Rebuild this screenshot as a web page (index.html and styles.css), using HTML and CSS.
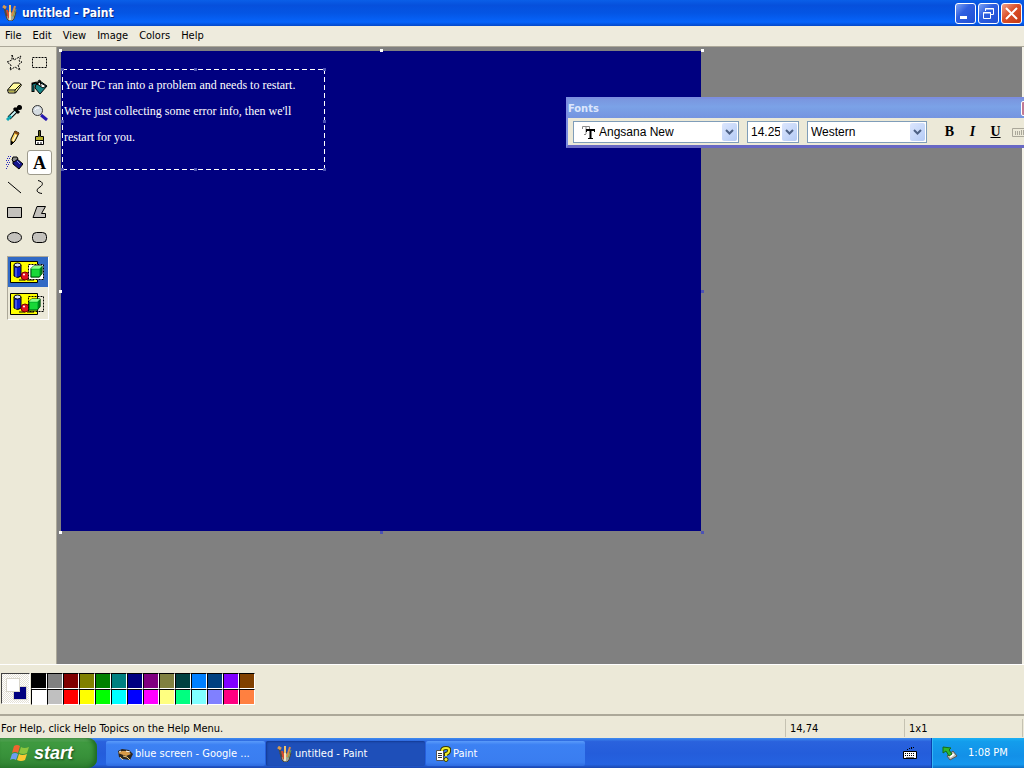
FILE: index.html
```
<!DOCTYPE html>
<html lang="en">
<head>
    <meta charset="UTF-8">
    <meta name="viewport" content="width=device-width, initial-scale=1.0">
    <title>untitled - Paint</title>
    <link rel="stylesheet" href="styles.css">
</head>
<body>

<svg class="defs" aria-hidden="true">
    <symbol id="paint" viewBox="0 0 16 16">
        <path d="M3 7l2 7 2 2h3l2-2 2-7z" fill="#9fa59a" stroke="#4b4438"/>
        <path d="M2 2l3 9" stroke="#4a4a44" stroke-width="2"/>
        <path d="M1 1l3 2" stroke="#d99a4e" stroke-width="3"/>
        <path d="M8 0v10" stroke="#f0c36a" stroke-width="2"/>
        <path d="M13 1l-3 10" stroke="#d88b48" stroke-width="2"/>
        <path d="M5 5l2 8" stroke="#d8492b" stroke-width="2"/>
        <path d="M8 7v8" stroke="#f3e6b8" stroke-width="2"/>
        <path d="M14 4l-3 8" stroke="#7aa54b"/>
    </symbol>
    <symbol id="shapes" viewBox="0 0 36 26">
        <path d="M1.500 2.500h27v21h-27z" fill="#ff0" stroke="#000"/>
        <path d="M5 6v11q4 3 7 0V6z" fill="#0b1ccb" stroke="#000"/>
        <path d="M7 9v9" stroke="#7d90ff"/>
        <ellipse cx="8.500" cy="6" rx="3.500" ry="2" fill="#d5deff" stroke="#000"/>
        <path d="M10 21h6M18 21h7" stroke="#808000" stroke-width="2"/>
        <circle cx="16" cy="17" r="4" fill="#e01020" stroke="#700"/>
        <circle cx="15" cy="15.500" r="1" fill="#fff"/>
    </symbol>
    <symbol id="cube" viewBox="0 0 16 16">
        <path d="M2 5l3-3h9v8l-3 4H2z" fill="#00b028" stroke="#003c08"/>
        <path d="M2 5l3-3h9l-3 3z" fill="#8cff8c"/>
        <path d="M3 6h8v7H3z" fill="#18d838"/>
        <path d="M12 5l2-2v7l-2 3z" fill="#007818"/>
    </symbol>
</svg>

<div class="window">
    <header class="titlebar">
        <svg class="icon"><use href="#paint"/></svg>
        <h1>untitled - Paint</h1>
        <button class="win-btn" aria-label="Minimize"><svg viewBox="0 0 19 19"><path d="M4 12h7v3H4z" fill="#fff"/></svg></button>
        <button class="win-btn" aria-label="Restore"><svg viewBox="0 0 19 19"><path d="M6.500 7V4.500h8v6H12M6 5h9M4.500 8.500h7v6h-7zM4 9h8" fill="none" stroke="#fff"/></svg></button>
        <button class="win-btn close" aria-label="Close"><svg viewBox="0 0 19 19"><path d="M4 4l11 11M15 4L4 15" stroke="#fff" stroke-width="2"/></svg></button>
    </header>

    <nav class="menubar">
        <button>File</button>
        <button>Edit</button>
        <button>View</button>
        <button>Image</button>
        <button>Colors</button>
        <button>Help</button>
    </nav>

    <main class="workspace">
        <aside class="toolbox">
            <div class="tools">
                <button aria-label="Free-Form Select"><svg viewBox="0 0 17 17"><path d="M6 1l2 5 7-4-2 5 3 1-4 3 2 5-5-3-5 3 1-5-4-3 5-2z" fill="none" stroke="#000" stroke-dasharray="2 1"/></svg></button>
                <button aria-label="Select"><svg viewBox="0 0 17 17"><path d="M1.500 3.500h14v10h-14z" fill="none" stroke="#000" stroke-dasharray="2 1"/></svg></button>
                <button aria-label="Eraser"><svg viewBox="0 0 17 17"><path d="M1.500 11l6-7h6l2 2-6 8h-7z" fill="#fffb9c" stroke="#000"/><path d="M2 11h7l6-6M9 11v3" fill="none" stroke="#000"/><path d="M3 12h5v1H3z" fill="#b3ae48"/></svg></button>
                <button aria-label="Fill With Color"><svg viewBox="0 0 17 17"><path d="M5 5l4-3 7 5-7 8-5-6z" fill="#16868a" stroke="#000"/><path d="M8 3l7 4-3 2-6-4z" fill="#fff" stroke="#000"/><path d="M7 6V2l2-1 1 6" fill="none" stroke="#000"/><path d="M6 4L2 5v8" fill="none" stroke="#000" stroke-width="3"/><path d="M5 5L2 6v6" fill="none" stroke="#087a80"/></svg></button>
                <button aria-label="Pick Color"><svg viewBox="0 0 17 17"><path d="M10 7l-7 7" stroke="#000" stroke-width="4"/><path d="M10 7l-6 6" stroke="#c9f6f8" stroke-width="2"/><path d="M5 12l-4 4" stroke="#12a7b5" stroke-width="3"/><path d="M8 4l5 5M10 6l4-4" stroke="#000" stroke-width="3"/><circle cx="13.500" cy="3.500" r="2.500" fill="#000"/></svg></button>
                <button aria-label="Magnifier"><svg viewBox="0 0 17 17"><circle cx="6.500" cy="6.500" r="5" fill="#d4dbe0" stroke="#333"/><path d="M4 6q1-3 4-2" fill="none" stroke="#fff"/><path d="M10 11l6 5" stroke="#2618b0" stroke-width="3"/></svg></button>
                <button aria-label="Pencil"><svg viewBox="0 0 17 17"><path d="M5 10l4-8 4 2-4 8-4 4z" fill="#ffd95e" stroke="#000"/><path d="M9 2l4 2-1 2-4-2z" fill="#8a4a10"/><path d="M10 6l-3 6" stroke="#fff"/><path d="M5 12l3 1-3 3z" fill="#000"/></svg></button>
                <button aria-label="Brush"><svg viewBox="0 0 17 17"><path d="M7.500 1.500h2v6h3v8h-8v-8h3z" fill="#fff" stroke="#000"/><path d="M8 2h1v6H8z" fill="#5a5a10"/><path d="M5 8h7v3H5z" fill="#b6b028"/><path d="M4 11.500h9M7 13v3M10 13v3" stroke="#000"/></svg></button>
                <button aria-label="Airbrush"><svg viewBox="0 0 17 17"><path d="M7 7l3-3 7 6-4 5-6-5z" fill="#15158d" stroke="#000"/><path d="M6 6l1-3h4l1 2-4 3z" fill="#8a8a8a" stroke="#000"/><path d="M11 7l3 3" stroke="#8e9be8"/><path d="M2 2.500h4M1 4.500h4M0 6.500h4M1 8.500h3M0 10.500h3M1 12.500h2M0 14.500h1" stroke="#2929bd" stroke-dasharray="1 1"/></svg></button>
                <button class="active" aria-label="Text" aria-pressed="true"><b>A</b></button>
                <button aria-label="Line"><svg viewBox="0 0 17 17"><path d="M2 3l13 11" stroke="#000"/></svg></button>
                <button aria-label="Curve"><svg viewBox="0 0 17 17"><path d="M7 1.500C13 3 12 6 9 8C4 11 6 14 11 14.500" fill="none" stroke="#000"/></svg></button>
                <button aria-label="Rectangle"><svg viewBox="0 0 17 17"><path d="M1.500 3.500h14v10h-14z" fill="#c3c1bc" stroke="#000"/></svg></button>
                <button aria-label="Polygon"><svg viewBox="0 0 17 17"><path d="M6 2.500h8.500L10.500 9.500h4v4H2z" fill="#c3c1bc" stroke="#000"/></svg></button>
                <button aria-label="Ellipse"><svg viewBox="0 0 17 17"><ellipse cx="8.500" cy="8.500" rx="7" ry="5" fill="#c3c1bc" stroke="#000"/></svg></button>
                <button aria-label="Rounded Rectangle"><svg viewBox="0 0 17 17"><rect x="1.500" y="3.500" width="14" height="10" rx="4" fill="#c3c1bc" stroke="#000"/></svg></button>
            </div>
            <div class="options">
                <button class="selected" aria-label="Opaque background"><svg viewBox="0 0 36 26"><use href="#shapes" width="36" height="26"/><path d="M19.500 5.500h15v15h-15z" fill="#fff" stroke="#000" stroke-dasharray="2 1"/><use href="#cube" x="20" y="5" width="15" height="15"/></svg></button>
                <button aria-label="Transparent background"><svg viewBox="0 0 36 26"><use href="#shapes" width="36" height="26"/><use href="#cube" x="18" y="6" width="15" height="15"/><path d="M19.500 5.500h15v15h-15z" fill="none" stroke="#000" stroke-dasharray="2 1"/></svg></button>
            </div>
        </aside>

        <section class="well">
            <div class="canvas">
                <i class="grip tl"></i><i class="grip tc"></i><i class="grip tr"></i>
                <i class="grip ml"></i><i class="grip mr blue"></i>
                <i class="grip bl"></i><i class="grip bc blue"></i><i class="grip br blue"></i>
                <div class="textbox">
                    <textarea aria-label="Text" spellcheck="false">Your PC ran into a problem and needs to restart.
We're just collecting some error info, then we'll
restart for you.</textarea>
                    <i class="grip tl blue"></i><i class="grip tc blue"></i><i class="grip tr blue"></i>
                    <i class="grip ml blue"></i><i class="grip mr blue"></i>
                    <i class="grip bl blue"></i><i class="grip bc blue"></i><i class="grip br blue"></i>
                </div>
            </div>
        </section>
    </main>

    <section class="palette">
        <div class="current"><span class="back"></span><span class="fore"></span></div>
        <div class="colors">
            <button class="c1" aria-label="Black"></button>
            <button class="c2" aria-label="Gray"></button>
            <button class="c3" aria-label="Maroon"></button>
            <button class="c4" aria-label="Olive"></button>
            <button class="c5" aria-label="Green"></button>
            <button class="c6" aria-label="Teal"></button>
            <button class="c7" aria-label="Navy"></button>
            <button class="c8" aria-label="Purple"></button>
            <button class="c9" aria-label="Moss"></button>
            <button class="c10" aria-label="Dark teal"></button>
            <button class="c11" aria-label="Azure"></button>
            <button class="c12" aria-label="Steel blue"></button>
            <button class="c13" aria-label="Violet"></button>
            <button class="c14" aria-label="Brown"></button>
            <button class="c15" aria-label="White"></button>
            <button class="c16" aria-label="Silver"></button>
            <button class="c17" aria-label="Red"></button>
            <button class="c18" aria-label="Yellow"></button>
            <button class="c19" aria-label="Lime"></button>
            <button class="c20" aria-label="Cyan"></button>
            <button class="c21" aria-label="Blue"></button>
            <button class="c22" aria-label="Magenta"></button>
            <button class="c23" aria-label="Light yellow"></button>
            <button class="c24" aria-label="Spring green"></button>
            <button class="c25" aria-label="Light cyan"></button>
            <button class="c26" aria-label="Periwinkle"></button>
            <button class="c27" aria-label="Rose"></button>
            <button class="c28" aria-label="Orange"></button>
        </div>
    </section>

    <footer class="statusbar">
        <span class="help">For Help, click Help Topics on the Help Menu.</span>
        <span class="pos">14,74</span>
        <span class="size">1x1</span>
    </footer>
</div>

<section class="fonts">
    <div class="fonts-title"><h2>Fonts</h2><button aria-label="Close fonts"></button></div>
    <div class="fonts-body">
        <div class="combo face">
            <svg viewBox="0 0 14 14"><path d="M1.500 4V1.500h7V4M5 2v7M3 9.500h2" fill="none" stroke="#888"/><path d="M5.500 7V4.500h8V7M7 13.500h5" fill="none" stroke="#000"/><path d="M5 5h9M9.500 4v9" stroke="#000" stroke-width="2"/></svg>
            <select aria-label="Font"><option>Angsana New</option></select>
            <span class="arrow"><svg viewBox="0 0 9 7"><path d="M1 1l3.500 3.500L8 1" fill="none" stroke="#4d6185" stroke-width="2"/></svg></span>
        </div>
        <div class="combo points">
            <select aria-label="Font size"><option>14.25</option></select>
            <span class="arrow"><svg viewBox="0 0 9 7"><path d="M1 1l3.500 3.500L8 1" fill="none" stroke="#4d6185" stroke-width="2"/></svg></span>
        </div>
        <div class="combo script">
            <select aria-label="Script"><option>Western</option></select>
            <span class="arrow"><svg viewBox="0 0 9 7"><path d="M1 1l3.500 3.500L8 1" fill="none" stroke="#4d6185" stroke-width="2"/></svg></span>
        </div>
        <div class="format">
            <button aria-label="Bold"><b>B</b></button>
            <button aria-label="Italic"><i>I</i></button>
            <button aria-label="Underline"><u>U</u></button>
            <button aria-label="Vertical writing"><svg viewBox="0 0 14 9"><path d="M.5.500h13v8H.5zM3.500 3v4M5.500 3v4M7.500 3v4M9.500 2v5M11.500 2v5" fill="none" stroke="#aaa79a"/></svg></button>
        </div>
    </div>
</section>

<div class="taskbar">
    <button class="start">
        <svg viewBox="0 0 20 18"><path d="M4 2q3-2 6 0L8 9Q5 7 2 9z" fill="#f0652f"/><path d="M11 3q3 2 8 0l-2 6q-4 2-8 0z" fill="#8cc63e"/><path d="M2 10q3-2 6 0l-2 6q-3-2-6 0z" fill="#6c9df0"/><path d="M9 10q3 2 8 0l-2 6q-4 2-8 0z" fill="#fbc832"/></svg>
        <span>start</span>
    </button>
    <div class="tasks">
        <button><svg viewBox="0 0 16 16"><path d="M1 5l4-2 7 1 4 4-3 6-7-1-4-2z" fill="#2d241b"/><path d="M1 7l4-2h5l4 3-5 2z" fill="#d89a48"/><path d="M3 11l3 3M10 11l3 3M6 10l4 1" stroke="#e8c77c"/><path d="M9 5l4 1M2 6l2-1" stroke="#fff"/></svg>blue screen - Google ...</button>
        <button class="current-task"><svg><use href="#paint"/></svg>untitled - Paint</button>
        <button><svg viewBox="0 0 16 16"><path d="M1.500 4.500h7v10h-7z" fill="#fff" stroke="#555"/><path d="M3 7.500h4M3 9.500h4M3 11.500h4" stroke="#333"/><path d="M7 5q0-3 4-3t3 3q0 2-3 3v2" fill="none" stroke="#3c3c00" stroke-width="4"/><path d="M7 5q0-3 4-3t3 3q0 2-3 3v2" fill="none" stroke="#f2f02a" stroke-width="2"/><circle cx="11" cy="13.500" r="2" fill="#f2f02a" stroke="#3c3c00"/></svg>Paint</button>
    </div>
    <button class="keyboard" aria-label="Keyboard"><svg viewBox="0 0 14 12"><path d="M4 2.500h2M8 .5h3M6 1.500h3" stroke="#000" stroke-dasharray="1 1"/><path d="M.5 4.500h13v7H.5z" fill="#fff" stroke="#000"/><path d="M2 6.500h10M2 8.500h10" stroke="#000" stroke-dasharray="1 1"/><path d="M3 10.500h8" stroke="#777"/></svg></button>
    <div class="tray">
        <svg viewBox="0 0 16 16"><path d="M5 11l6-5 4 5-7 4z" fill="#bcbcb4" stroke="#555"/><path d="M8 12l4-3" stroke="#fff" stroke-width="2"/><path d="M1 2l8 1-2 2 3 4-3 2-3-5-3 2z" fill="#2eb82e" stroke="#176b17"/></svg>
        <time>1:08 PM</time>
    </div>
</div>

</body>
</html>
```
FILE: styles.css
```
* {
    box-sizing: border-box;
}

body {
    margin: 0;
    height: 100vh;
    display: flex;
    flex-direction: column;
    overflow: hidden;
    position: relative;
    background: #ece9d8;
    font: 11px/14px Tahoma, "DejaVu Sans Condensed", sans-serif;
    color: #000;
}

button {
    font: inherit;
    color: inherit;
    margin: 0;
    padding: 0;
    border: 0;
    background: none;
}

svg {
    display: block;
    fill: none;
}

.defs {
    position: absolute;
    width: 0;
    height: 0;
}

.window {
    flex: 1;
    min-height: 0;
    display: flex;
    flex-direction: column;
}

/* title bar */
.titlebar {
    display: flex;
    align-items: center;
    gap: 2px;
    height: 26px;
    padding: 0 2px;
    background: linear-gradient(#0a5fe8 0, #0650dc 20%, #0455e4 50%, #0664fb 85%, #0448c8 100%);
}

.titlebar .icon {
    width: 16px;
    height: 16px;
}

.titlebar h1 {
    flex: 1;
    margin: 0 2px;
    font: bold 12px/16px "Trebuchet MS", "DejaVu Sans Condensed", sans-serif;
    color: #fff;
    text-shadow: 1px 1px #0a2a86;
}

.win-btn {
    width: 21px;
    height: 21px;
    border: 1px solid #fff;
    border-radius: 3px;
    background: linear-gradient(135deg, #7da2f4, #2f5fe0 40%, #1f4fd4);
}

.win-btn.close {
    background: linear-gradient(135deg, #f0a28a, #dc4f28 45%, #c23a14);
}

/* menu */
.menubar {
    display: flex;
    gap: 11px;
    height: 20px;
    padding: 0 5px;
    background: #eeebdd;
}

/* work area */
.workspace {
    flex: 1;
    min-height: 0;
    display: flex;
    border-top: 1px solid #aca899;
    border-bottom: 1px solid #fff;
}

.toolbox {
    width: 57px;
    padding: 3px 0 0 2px;
    background: #ece9d8;
    border-right: 1px solid #aca899;
}

.tools {
    display: grid;
    grid-template-columns: 25px 25px;
    grid-auto-rows: 25px;
}

.tools button {
    display: flex;
    align-items: center;
    justify-content: center;
}

.tools svg {
    width: 17px;
    height: 17px;
}

.tools .active {
    border: 1px solid #9d9a8c;
    border-radius: 3px;
    background: #fff;
    font: 18px/20px "Liberation Serif", serif;
}

.options {
    width: 42px;
    margin: 6px 0 0 5px;
    display: grid;
    gap: 2px;
    border: 1px solid;
    border-color: #aca899 #fff #fff #aca899;
}

.options button {
    display: flex;
    align-items: center;
    padding-left: 1px;
    height: 30px;
}

.options .selected {
    background: #316ac5;
}

.options svg {
    width: 36px;
    height: 26px;
}

.well {
    flex: 1;
    padding: 4px;
    background: #808080;
    border-right: 2px solid #f4f2e8;
    overflow: hidden;
}

.canvas {
    position: relative;
    width: 640px;
    height: 480px;
    background: #000080;
}

.grip {
    position: absolute;
    width: 3px;
    height: 3px;
    background: #fff;
}

.grip.blue {
    background: #4c52b4;
}

.tl, .tc, .tr { top: -2px; }
.ml, .mr { top: calc(50% - 1px); }
.bl, .bc, .br { bottom: -3px; }
.tl, .ml, .bl { left: -2px; }
.tc, .bc { left: calc(50% - 1px); }
.tr, .mr, .br { right: -3px; }

.textbox {
    position: absolute;
    left: 1px;
    top: 18px;
    width: 263px;
    height: 101px;
    background:
        repeating-linear-gradient(90deg, #fff 0 5px, transparent 5px 8px) top / 100% 1px no-repeat,
        repeating-linear-gradient(90deg, #fff 0 5px, transparent 5px 8px) bottom / 100% 1px no-repeat,
        repeating-linear-gradient(#fff 0 5px, transparent 5px 8px) left / 1px 100% no-repeat,
        repeating-linear-gradient(#fff 0 5px, transparent 5px 8px) right / 1px 100% no-repeat;
}

.textbox .grip {
    margin: 1px 2px 2px 1px;
}

.textbox textarea {
    display: block;
    width: 100%;
    height: 100%;
    padding: 3px 2px;
    border: 0;
    outline: 0;
    resize: none;
    overflow: hidden;
    background: none;
    color: #fff;
    font: 12px/26px "Liberation Serif", serif;
}

/* color box */
.palette {
    display: flex;
    gap: 1px;
    height: 50px;
    padding: 8px 1px;
    border-bottom: 1px solid #aca899;
}

.current {
    display: grid;
    width: 29px;
    height: 31px;
    border: 1px solid;
    border-color: #404040 #fff #fff #404040;
    background: repeating-conic-gradient(#fff 0 25%, #e4e1d6 0 50%) 0 0 / 2px 2px;
}

.current span {
    grid-area: 1 / 1;
    width: 14px;
    height: 14px;
    border: 1px solid #d8d5ca;
}

.current .back {
    margin: 12px 0 0 11px;
    background: #000080;
}

.current .fore {
    margin: 4px 0 0 4px;
    background: #fff;
}

.colors {
    display: grid;
    grid-template-columns: repeat(14, 16px);
    grid-auto-rows: 16px;
}

.colors button {
    border: 1px solid;
    border-color: #000 #fff #fff #000;
}

.c1 { background: #000; }
.c2 { background: #808080; }
.c3 { background: #800000; }
.c4 { background: #808000; }
.c5 { background: #008000; }
.c6 { background: #008080; }
.c7 { background: #000080; }
.c8 { background: #800080; }
.c9 { background: #808040; }
.c10 { background: #004040; }
.c11 { background: #0080ff; }
.c12 { background: #004080; }
.c13 { background: #8000ff; }
.c14 { background: #804000; }
.c15 { background: #fff; }
.c16 { background: #c0c0c0; }
.c17 { background: #f00; }
.c18 { background: #ff0; }
.c19 { background: #0f0; }
.c20 { background: #0ff; }
.c21 { background: #00f; }
.c22 { background: #f0f; }
.c23 { background: #ffff80; }
.c24 { background: #00ff80; }
.c25 { background: #80ffff; }
.c26 { background: #8080ff; }
.c27 { background: #ff0080; }
.c28 { background: #ff8040; }

/* status bar */
.statusbar {
    display: flex;
    height: 23px;
    padding: 3px 1px 1px;
    border-top: 1px solid #aca899;
    line-height: 20px;
}

.help {
    flex: 1;
}

.pos, .size {
    width: 119px;
    padding-left: 4px;
    border-left: 1px solid #c5c2b2;
}

.size {
    border-right: 1px solid #c5c2b2;
}

/* fonts toolbar */
.fonts {
    position: absolute;
    left: 566px;
    top: 97px;
    width: 476px;
    border: 2px solid #7c8ee0;
    border-bottom: 3px solid #6868c4;
    background: #ece9d8;
}

.fonts-title {
    display: flex;
    align-items: center;
    height: 19px;
    background: linear-gradient(#7a96df, #7ba2e7 40%, #7494e0);
}

.fonts-title h2 {
    flex: 1;
    margin: 0;
    font-size: 11px;
    color: #dce6fc;
}

.fonts-title button {
    width: 19px;
    height: 15px;
    border: 1px solid #fff;
    border-radius: 2px;
    background: #c27a93;
}

.fonts-body {
    display: flex;
    gap: 8px;
    padding: 3px 5px 2px;
}

.combo {
    display: flex;
    align-items: center;
    height: 22px;
    padding: 1px;
    border: 1px solid #7f9db9;
    background: #fff;
}

.combo.face {
    width: 166px;
    padding-left: 7px;
}

.combo.points {
    width: 52px;
}

.combo.script {
    width: 120px;
}

.combo select {
    flex: 1;
    min-width: 0;
    height: 18px;
    padding: 0 2px;
    border: 0;
    background: none;
    appearance: none;
    font: 12px/16px "Liberation Sans", Arial, sans-serif;
    color: #000;
}

.combo.face > svg {
    width: 14px;
    height: 14px;
    margin-right: 2px;
}

.arrow {
    display: grid;
    place-items: center;
    width: 15px;
    height: 18px;
    border-radius: 2px;
    background: linear-gradient(135deg, #dce6fd, #b4cbf6);
}

.arrow svg {
    width: 9px;
    height: 7px;
}

.format {
    display: flex;
    padding-left: 3px;
}

.format button {
    display: grid;
    place-items: center;
    width: 23px;
    font: bold 14px/18px "Liberation Serif", serif;
}

.format svg {
    width: 14px;
    height: 9px;
}

/* taskbar */
.taskbar {
    display: flex;
    height: 30px;
    background: linear-gradient(#3f8cf0 0, #2a62dd 12%, #245ddb 50%, #2562e0 88%, #1b47b0 100%);
    color: #fff;
}

.start {
    display: flex;
    align-items: center;
    gap: 4px;
    width: 97px;
    padding-left: 10px;
    border-radius: 0 9px 9px 0;
    background: linear-gradient(#67b267 0, #3f9a40 15%, #38913a 60%, #2f7f31 100%);
    box-shadow: inset -3px 0 4px #1f6b22;
    font: italic bold 18px/22px "Franklin Gothic Medium", "Liberation Sans", sans-serif;
    text-shadow: 1px 1px 2px #1c4d1c;
}

.start svg {
    width: 20px;
    height: 18px;
}

.tasks {
    flex: 1;
    display: flex;
    gap: 1px;
    padding: 3px 0 2px 9px;
}

.tasks button {
    display: flex;
    align-items: center;
    gap: 2px;
    width: 159px;
    padding-left: 11px;
    border-radius: 2px;
    background: linear-gradient(#5a9bfa, #3c81f3 15%, #3a7df0 85%, #2e6be0);
    white-space: nowrap;
}

.tasks button:last-child {
    padding-left: 9px;
}

.tasks .current-task {
    background: #1e4fb9;
    box-shadow: inset 1px 1px 2px #143a92;
}

.tasks svg {
    width: 16px;
    height: 16px;
}

.keyboard {
    padding: 0 14px;
}

.keyboard svg {
    width: 14px;
    height: 12px;
}

.tray {
    display: flex;
    align-items: center;
    gap: 10px;
    width: 93px;
    padding-left: 10px;
    border-left: 1px solid #0b3fae;
    box-shadow: inset 1px 0 #35b6f6;
    background: linear-gradient(#1bb0f4 0, #139dec 12%, #1290e8 60%, #1598ee 88%, #0d6fc4 100%);
}

.tray svg {
    width: 16px;
    height: 16px;
}
```
